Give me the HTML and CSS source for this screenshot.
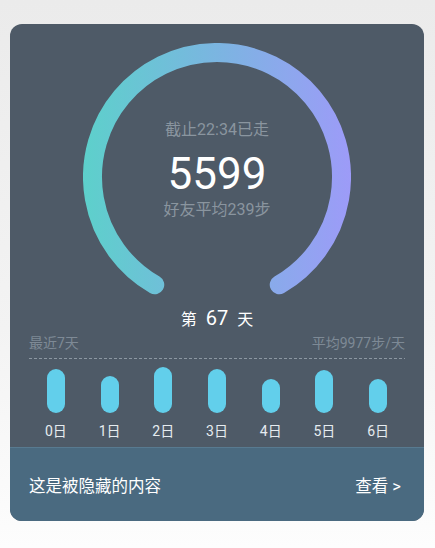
FILE: index.html
```html
<!DOCTYPE html>
<html lang="zh">
<head>
<meta charset="utf-8">
<link rel="stylesheet" href="styles.css">
</head>
<body>
<div class="card">
  <div class="top">
    <div class="gauge">
      <svg class="ring" width="268" height="256" viewBox="0 0 268 256">
        <defs>
          <linearGradient id="g" gradientUnits="userSpaceOnUse" x1="0" y1="0" x2="268" y2="0">
            <stop offset="0" stop-color="#5dd0cb"/>
            <stop offset="0.5" stop-color="#7bb5e1"/>
            <stop offset="1" stop-color="#9d9bf8"/>
          </linearGradient>
        </defs>
        <path d="M 71.75 241.8 A 124.5 124.5 0 1 1 196.25 241.8" fill="none" stroke="url(#g)" stroke-width="19" stroke-linecap="round"/>
      </svg>
      <div class="gauge-text">
        <div class="sub">截止22:34已走</div>
        <div class="big">5599</div>
        <div class="sub">好友平均239步</div>
      </div>
    </div>
    <div class="day">第 <span class="num">67</span> 天</div>
    <div class="legend"><span>最近7天</span><span>平均9977步/天</span></div>
    <div class="dash"></div>
    <div class="bars">
      <div class="col"><div class="bar" style="height:44px"></div></div>
      <div class="col"><div class="bar" style="height:37px"></div></div>
      <div class="col"><div class="bar" style="height:46px"></div></div>
      <div class="col"><div class="bar" style="height:44px"></div></div>
      <div class="col"><div class="bar" style="height:34px"></div></div>
      <div class="col"><div class="bar" style="height:43px"></div></div>
      <div class="col"><div class="bar" style="height:34px"></div></div>
    </div>
    <div class="labels">
      <span>0日</span><span>1日</span><span>2日</span><span>3日</span><span>4日</span><span>5日</span><span>6日</span>
    </div>
  </div>
  <div class="bottom">
    <span>这是被隐藏的内容</span>
    <span>查看 &gt;</span>
  </div>
</div>
</body>
</html>
```

FILE: styles.css
```css
html, body {
  margin: 0;
  padding: 0;
}
body {
  min-height: 548px;
  background: linear-gradient(to bottom, #ebebeb 0%, #f3f3f3 60%, #fdfdfd 100%);
  font-family: Roboto, "Noto Sans CJK SC", sans-serif;
  padding: 24px 0 0 10px;
  box-sizing: border-box;
}
.card {
  width: 414px;
  border-radius: 12px;
  overflow: hidden;
  background: #4e5a67;
}
.top {
  padding: 19px 0 6px;
}
.gauge {
  display: grid;
  justify-items: center;
}
.ring, .gauge-text {
  grid-area: 1 / 1;
}
.gauge-text {
  padding-top: 76px;
  text-align: center;
  display: flex;
  flex-direction: column;
  align-items: center;
}
.sub {
  color: #8a959f;
  font-size: 16px;
  line-height: 22px;
}
.big {
  color: #ffffff;
  font-size: 44px;
  line-height: 56px;
  margin: 5px 0 -3px;
}
.day {
  margin-top: 7px;
  text-align: center;
  color: #ffffff;
  font-size: 16px;
  line-height: 24px;
}
.day .num {
  font-size: 20px;
  margin: 0 5px;
}
.legend {
  margin-top: 2px;
  padding: 0 19px;
  display: flex;
  justify-content: space-between;
  color: #7e8a96;
  font-size: 14px;
  line-height: 18px;
}
.dash {
  margin: 6px 19px 0;
  height: 1px;
  background: repeating-linear-gradient(to right, #8c97a2 0 3px, transparent 3px 5px);
}
.bars {
  margin: 0 19px;
  height: 54px;
  display: grid;
  grid-template-columns: repeat(7, 1fr);
  align-items: end;
}
.col {
  display: flex;
  justify-content: center;
}
.bar {
  width: 18px;
  border-radius: 9px;
  background: #62cfeb;
}
.labels {
  margin: 8px 19px 0;
  display: grid;
  grid-template-columns: repeat(7, 1fr);
  text-align: center;
  color: #e6ecf0;
  font-size: 14px;
  line-height: 20px;
}
.bottom {
  height: 74px;
  box-sizing: border-box;
  border-top: 1px solid #587a90;
  background: #4a6a80;
  display: flex;
  align-items: center;
  justify-content: space-between;
  padding: 0 23px 0 19px;
  color: #ffffff;
  font-size: 16.5px;
}
```
